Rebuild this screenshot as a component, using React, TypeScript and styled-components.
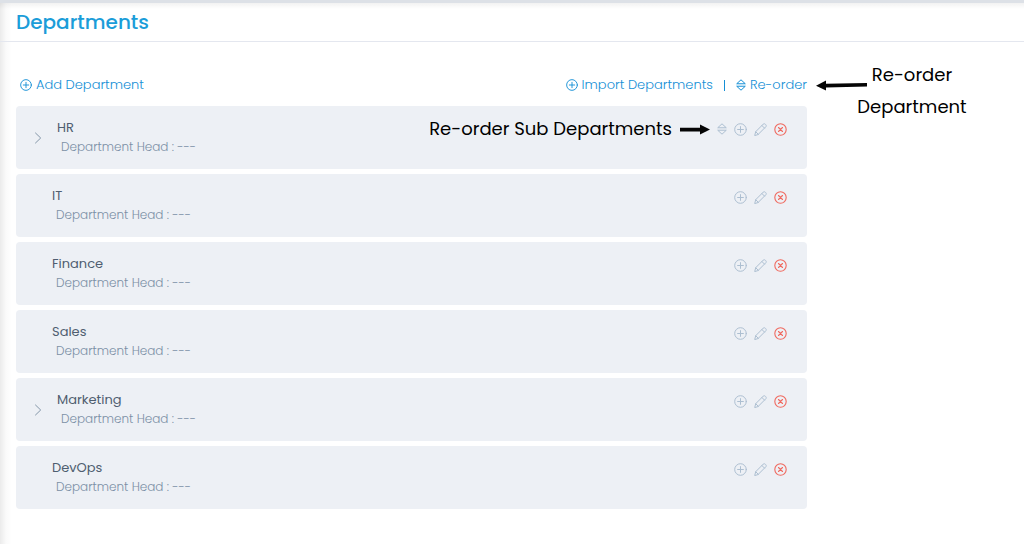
import React from 'react';
import styled, { createGlobalStyle } from 'styled-components';

const GlobalStyle = createGlobalStyle`
  *, *::before, *::after { box-sizing: border-box; }
  body {
    margin: 0;
    background: #fff;
    font-family: Poppins, Inter, "Open Sans", sans-serif;
    color: #4a5a6c;
  }
`;

const Page = styled.div`
  min-height: 100vh;
  border-top: 3px solid #dde1e7;
  background:
    linear-gradient(to bottom, rgba(0, 0, 0, 0.05), transparent 6px),
    linear-gradient(to right, rgba(0, 0, 0, 0.08), rgba(0, 0, 0, 0.02) 6px, transparent 12px),
    #fff;
`;

const Header = styled.header`
  padding: 4px 16px;
  border-bottom: 1px solid #e4e7ef;
`;

const Title = styled.h1`
  margin: 0;
  font-size: 20px;
  line-height: 30px;
  font-weight: 500;
  color: #1b9dd9;
`;

const Content = styled.div`
  display: grid;
  grid-template-columns: minmax(0, 791fr) minmax(0, 217fr);
  padding: 31px 0 31px 16px;
`;

const Toolbar = styled.div`
  display: flex;
  align-items: center;
  justify-content: space-between;
  height: 24px;
  margin-bottom: 9px;
  padding-left: 4px;
`;

const ToolbarGroup = styled.div`
  display: flex;
  align-items: center;
  gap: 11px;
`;

const LinkButton = styled.button`
  display: inline-flex;
  align-items: center;
  gap: 4px;
  padding: 0;
  border: 0;
  background: none;
  font: inherit;
  font-size: 13px;
  font-weight: 300;
  line-height: 20px;
  white-space: nowrap;
  color: #158fd6;
  cursor: pointer;
`;

const Separator = styled.span`
  width: 1px;
  height: 11px;
  background: #158fd6;
`;

const List = styled.ul`
  display: grid;
  gap: 5px;
  margin: 0;
  padding: 0;
  list-style: none;
`;

const Row = styled.li`
  display: flex;
  justify-content: space-between;
  min-height: 63px;
  padding: 12px 20px 12px 16px;
  border-radius: 4px;
  background: #edf0f5;
`;

const RowMain = styled.div`
  display: flex;
  align-items: center;
`;

const Toggle = styled.div<{ $wide: boolean }>`
  display: flex;
  width: ${(p) => (p.$wide ? 25 : 20)}px;
`;

const IconButton = styled.button<{ $tone?: 'danger' }>`
  display: inline-flex;
  padding: 0;
  border: 0;
  background: none;
  color: ${(p) => (p.$tone === 'danger' ? '#f0695f' : '#adbfd1')};
  cursor: pointer;
`;

const ToggleButton = styled(IconButton)`
  color: #8496a8;
`;

const Name = styled.div`
  font-size: 13px;
  line-height: 18px;
  color: #4f5e70;
`;

const Head = styled.div`
  padding-left: 4px;
  font-size: 12px;
  font-weight: 300;
  line-height: 20px;
  color: #7b8fa5;
`;

const Actions = styled.div`
  display: flex;
  align-items: center;
  gap: 7px;
  height: 22px;
`;

const Note = styled.div`
  display: flex;
  align-items: center;
  gap: 8px;
  font-size: 18px;
  line-height: 24px;
  white-space: nowrap;
  color: #000;
`;

const SideNote = styled.aside`
  display: flex;
  align-items: flex-start;
  padding-left: 8px;
`;

const SideArrow = styled.div`
  display: flex;
  flex: none;
  padding-top: 6px;
`;

const SideText = styled.p`
  width: 112px;
  margin: -14px 0 0 -12px;
  font-size: 18px;
  line-height: 32px;
  text-align: center;
  color: #000;
`;

const line = {
  fill: 'none',
  stroke: 'currentColor',
  strokeLinecap: 'round' as const,
  strokeLinejoin: 'round' as const,
  'aria-hidden': true,
};

const PlusCircle = ({ size = 13 }: { size?: number }) => (
  <svg width={size} height={size} viewBox="0 0 26 26" strokeWidth="2" {...line}>
    <circle cx="13" cy="13" r="11.6" />
    <path d="M13 7.2v11.6M7.2 13h11.6" />
  </svg>
);

const CrossCircle = () => (
  <svg width="13" height="13" viewBox="0 0 26 26" strokeWidth="2.2" {...line}>
    <circle cx="13" cy="13" r="11.4" />
    <path d="M9 9l8 8M17 9l-8 8" />
  </svg>
);

const Pencil = () => (
  <svg width="13" height="13" viewBox="0 0 26 26" strokeWidth="2" {...line}>
    <path d="M1.6 24.4l1.8-7L18.3 2.5c1.3-1.3 3.2-1.3 4.4 0l.8.8c1.3 1.3 1.3 3.2 0 4.4L8.6 22.6z" />
    <path d="M3.4 17.4l5.2 5.2M15.8 5l5.2 5.2" />
  </svg>
);

const Sort = () => (
  <svg width="10" height="12" viewBox="0 0 20 24" strokeWidth="2" {...line}>
    <path d="M2 9L10 1.6 18 9zM2 15l8 7.4 8-7.4z" />
  </svg>
);

const Chevron = () => (
  <svg width="12" height="12" viewBox="0 0 12 12" strokeWidth="1" {...line}>
    <path d="M3.5 1l5.2 5-5.2 5" />
  </svg>
);

const ArrowRight = () => (
  <svg width="30" height="12" viewBox="0 0 30 12" aria-hidden>
    <path d="M0 4.8h20V1.6l10 5-10 5V8.4H0z" fill="#050505" />
  </svg>
);

const ArrowLeft = () => (
  <svg width="53" height="12" viewBox="0 0 53 12" aria-hidden>
    <path d="M52 4v3.6L11 8.4v3.2L1 6.8 11 1.6v3.2z" fill="#050505" />
  </svg>
);

type Department = { name: string; expandable?: boolean; annotated?: boolean };

const departments: Department[] = [
  { name: 'HR', expandable: true, annotated: true },
  { name: 'IT' },
  { name: 'Finance' },
  { name: 'Sales' },
  { name: 'Marketing', expandable: true },
  { name: 'DevOps' },
];

const DepartmentRow = ({ name, expandable = false, annotated = false }: Department) => (
  <Row>
    <RowMain>
      <Toggle $wide={expandable}>
        {expandable && (
          <ToggleButton type="button" aria-label={`Expand ${name}`}>
            <Chevron />
          </ToggleButton>
        )}
      </Toggle>
      <div>
        <Name>{name}</Name>
        <Head>Department Head : ---</Head>
      </div>
    </RowMain>
    <Actions>
      {annotated && (
        <>
          <Note>
            Re-order Sub Departments
            <ArrowRight />
          </Note>
          <IconButton type="button" aria-label={`Re-order sub departments of ${name}`}>
            <Sort />
          </IconButton>
        </>
      )}
      <IconButton type="button" aria-label={`Add sub department to ${name}`}>
        <PlusCircle />
      </IconButton>
      <IconButton type="button" aria-label={`Edit ${name}`}>
        <Pencil />
      </IconButton>
      <IconButton type="button" $tone="danger" aria-label={`Delete ${name}`}>
        <CrossCircle />
      </IconButton>
    </Actions>
  </Row>
);

export default function App() {
  return (
    <Page>
      <GlobalStyle />
      <Header>
        <Title>Departments</Title>
      </Header>
      <Content>
        <main>
          <Toolbar>
            <LinkButton type="button">
              <PlusCircle size={12} />
              Add Department
            </LinkButton>
            <ToolbarGroup>
              <LinkButton type="button">
                <PlusCircle size={12} />
                Import Departments
              </LinkButton>
              <Separator />
              <LinkButton type="button">
                <Sort />
                Re-order
              </LinkButton>
            </ToolbarGroup>
          </Toolbar>
          <List>
            {departments.map((d) => (
              <DepartmentRow key={d.name} {...d} />
            ))}
          </List>
        </main>
        <SideNote>
          <SideArrow>
            <ArrowLeft />
          </SideArrow>
          <SideText>Re-order Department</SideText>
        </SideNote>
      </Content>
    </Page>
  );
}
